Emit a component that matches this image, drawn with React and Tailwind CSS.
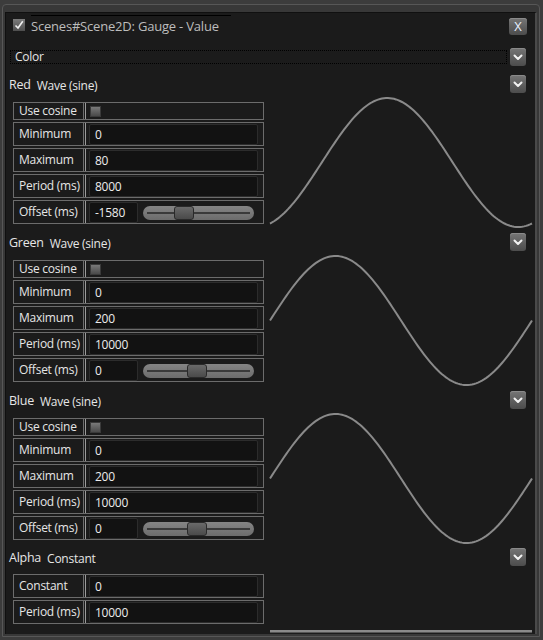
import React from "react";

const W = 262;
function wavePath(offFrac, mid, amp) {
  let d = "";
  for (let x = 0; x <= W; x += 2) {
    const t = x / W;
    const y = mid - amp * Math.sin(2 * Math.PI * (t + offFrac));
    d += (x === 0 ? "M" : "L") + x + " " + y.toFixed(2) + " ";
  }
  return d;
}

function Chevron() {
  return (
    <div className="w-[16px] h-[18px] rounded-[3px] bg-gradient-to-b from-[#767676] to-[#4c4c4c] flex items-center justify-center shadow-[inset_0_1px_0_#8a8a8a]">
      <svg width="10" height="7" viewBox="0 0 10 7">
        <path d="M1.5 1.5 L5 5 L8.5 1.5" fill="none" stroke="#f2f2f2" strokeWidth="2" strokeLinecap="round" strokeLinejoin="round" />
      </svg>
    </div>
  );
}

function LabelCell({ children }) {
  return (
    <div className="w-[70px] shrink-0 border-r border-[#6c6c6c] flex items-center pl-[5px] text-[#e6e6e6] whitespace-nowrap">
      {children}
    </div>
  );
}

function Divider() {
  return <div className="w-[1px] ml-[1px] bg-[#9a9a9a] shrink-0" />;
}

function ValueRow({ label, value }) {
  return (
    <div className="h-[24px] border border-[#6c6c6c] flex">
      <LabelCell>{label}</LabelCell>
      <Divider />
      <div className="flex-1 pl-[3px] pr-[5px] pt-[1px] flex">
        <div className="flex-1 rounded-[2px] bg-[#121212] border border-[#2c2c2c] flex items-center pl-[5px] text-[#ececec]">
          {value}
        </div>
      </div>
    </div>
  );
}

function CosineRow() {
  return (
    <div className="h-[18px] border border-[#6c6c6c] flex">
      <LabelCell>Use cosine</LabelCell>
      <Divider />
      <div className="flex-1 flex items-center pl-[4px]">
        <div className="w-[11px] h-[11px] bg-gradient-to-b from-[#7a7a7a] to-[#4a4a4a] border border-[#3a3a3a]" />
      </div>
    </div>
  );
}

function OffsetRow({ value, thumb }) {
  return (
    <div className="h-[24px] border border-[#6c6c6c] flex">
      <LabelCell>Offset (ms)</LabelCell>
      <Divider />
      <div className="flex-1 pl-[3px] pr-[5px] pt-[1px] flex items-stretch">
        <div className="w-[49px] rounded-[2px] bg-[#121212] border border-[#2c2c2c] flex items-center pl-[5px] text-[#ececec]">
          {value}
        </div>
        <div className="flex-1 flex items-center pl-[5px] pr-[4px]">
          <div className="relative w-full h-[14px] rounded-full bg-gradient-to-b from-[#858585] to-[#6c6c6c] flex items-center px-[4px]">
            <div className="w-full h-[2px] bg-[#3a3a3a]" />
            <div
              className="absolute top-[0px] w-[20px] h-[14px] rounded-[3px] bg-gradient-to-b from-[#6a6a6a] to-[#4a4a4a] border border-[#2a2a2a]"
              style={{ left: thumb }}
            />
          </div>
        </div>
      </div>
    </div>
  );
}

function Header({ name, kind }) {
  return (
    <div className="h-[18px] flex items-center justify-between pr-[9px]">
      <div className="flex items-center text-[#e6e6e6] pt-[3px]">
        <span className="text-[12.5px]">{name}</span>
        <span className="ml-[6px]">{kind}</span>
      </div>
      <Chevron />
    </div>
  );
}

function WaveSection({ name, min, max, period, offset, thumb, offFrac, first }) {
  return (
    <div className={first ? "mt-[9px]" : "mt-[9px]"}>
      <Header name={name} kind="Wave (sine)" />
      <div className="flex mt-[9px] pl-[4px]">
        <div className="w-[251px] flex flex-col gap-[2px] shrink-0">
          <CosineRow />
          <ValueRow label="Minimum" value={min} />
          <ValueRow label="Maximum" value={max} />
          <ValueRow label="Period (ms)" value={period} />
          <OffsetRow value={offset} thumb={thumb} />
        </div>
        <svg width={W} height="122" className="ml-[6px] overflow-visible shrink-0">
          <path d={wavePath(offFrac, 60.5, 64.5)} fill="none" stroke="#8a8a8a" strokeWidth="2" />
        </svg>
      </div>
    </div>
  );
}

export default function App() {
  return (
    <div
      className="w-[543px] h-[640px] bg-[#3c3c3c] pt-[4px] pl-[2px] overflow-hidden text-[12px] leading-none tracking-[-0.25px]"
      style={{ fontFamily: '"Open Sans", "Noto Sans", sans-serif' }}
    >
      <div className="w-[538px] h-[633px] border border-[#575757] rounded-t-[4px] bg-[#383838] pt-[7px] pl-[2px] pr-[2px] pb-[2px]">
        <div className="h-full bg-[#1b1b1b] border-t border-l border-[#101010] border-r-2 border-r-[#4a4a4a] pl-[3px] relative">
          {/* title */}
          <div className="h-[23px] flex items-start justify-between pr-[8px]">
            <div className="flex items-start">
              <div className="mt-[6px] ml-[4px] w-[12px] h-[12px] bg-gradient-to-b from-[#7c7c7c] to-[#4e4e4e] flex items-center justify-center">
                <svg width="10" height="10" viewBox="0 0 10 10">
                  <path d="M1.5 5.5 L4 8 L8.8 1.2" fill="none" stroke="#f0f0f0" strokeWidth="1.6" />
                </svg>
              </div>
              <div className="ml-[6px] mt-[2px] w-[200px] border-t border-black pt-[4px] text-[13px] tracking-[-0.2px] text-[#bdbdbd] whitespace-nowrap">
                Scenes#Scene2D: Gauge - Value
              </div>
            </div>
            <div className="mt-[5px] w-[18px] h-[17px] rounded-[3px] bg-gradient-to-b from-[#767676] to-[#4c4c4c] flex items-center justify-center text-[#e8f0ff] text-[13px] shadow-[inset_0_1px_0_#8a8a8a]">
              X
            </div>
          </div>
          {/* color row */}
          <div className="mt-[12px] h-[18px] flex items-center pr-[9px]">
            <div className="ml-[1px] mr-[3px] flex-1 h-[14px] border border-dotted border-black flex items-center pl-[4px] text-[#e6e6e6]">
              Color
            </div>
            <Chevron />
          </div>

          <WaveSection name="Red" min="0" max="80" period="8000" offset="-1580" thumb={31} offFrac={-1580 / 8000} first />
          <WaveSection name="Green" min="0" max="200" period="10000" offset="0" thumb={44} offFrac={0} />
          <WaveSection name="Blue" min="0" max="200" period="10000" offset="0" thumb={44} offFrac={0} />

          <div className="mt-[8px]">
            <Header name="Alpha" kind="Constant" />
            <div className="flex mt-[8px] pl-[4px]">
              <div className="w-[251px] flex flex-col gap-[2px] shrink-0">
                <ValueRow label="Constant" value="0" />
                <ValueRow label="Period (ms)" value="10000" />
              </div>
              <svg width={W} height="50" className="ml-[6px] overflow-visible shrink-0">
                <rect x="0" y="56" width={W} height="2" fill="#8a8a8a" />
                <rect x="0" y="58" width={W} height="1" fill="#555" />
              </svg>
            </div>
          </div>
        </div>
      </div>
    </div>
  );
}
